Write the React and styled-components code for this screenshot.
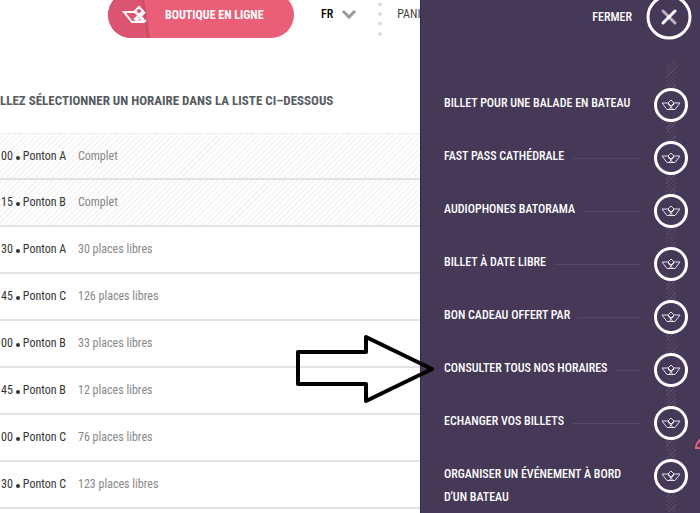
import React from 'react'
import styled, { createGlobalStyle } from 'styled-components'

const menu = [
    'BILLET POUR UNE BALADE EN BATEAU',
    'FAST PASS CATHÉDRALE',
    'AUDIOPHONES BATORAMA',
    'BILLET À DATE LIBRE',
    'BON CADEAU OFFERT PAR',
    'CONSULTER TOUS NOS HORAIRES',
    'ECHANGER VOS BILLETS',
    "ORGANISER UN ÉVÉNEMENT À BORD D'UN BATEAU",
]

const departures = [
    { time: '00', pier: 'Ponton A', seats: 'Complet', full: true },
    { time: '15', pier: 'Ponton B', seats: 'Complet', full: true },
    { time: '30', pier: 'Ponton A', seats: '30 places libres' },
    { time: '45', pier: 'Ponton C', seats: '126 places libres' },
    { time: '00', pier: 'Ponton B', seats: '33 places libres' },
    { time: '45', pier: 'Ponton B', seats: '12 places libres' },
    { time: '00', pier: 'Ponton C', seats: '76 places libres' },
    { time: '30', pier: 'Ponton C', seats: '123 places libres' },
]

function Boat() {
    return (
        <BoatIcon viewBox="0 0 20 12" aria-hidden="true">
            <path d="M7 4H1l5 6.500h2L13 5M13 4h6l-5 6.500h-2L7 5M10 1l3 3-3 3-3-3zM7 10.500h6" />
        </BoatIcon>
    )
}

function App() {
    return (
        <Page>
            <GlobalStyle />
            <Content>
                <TopBar>
                    <Shop href="#boutique">
                        <ShopMark viewBox="0 0 44 46" aria-hidden="true">
                            <path d="M0 0h35l7 46H0z" fill="#dc5570" />
                            <path d="M33 0h2l7 46h-3z" fill="#cc4d67" />
                            <path d="M27 20H16l8 10h12l2-2M27 20l9 9M27 30l10-10M31 15l4 4-4 4-4-4zM31 23l4 4-4 3-4-3z" fill="none" stroke="#fff" strokeWidth="2" />
                        </ShopMark>
                        <ShopLabel>BOUTIQUE EN LIGNE</ShopLabel>
                    </Shop>
                    <Language type="button">
                        FR
                        <Chevron viewBox="0 0 16 10" aria-hidden="true">
                            <path d="M2 2l6 6 6-6" />
                        </Chevron>
                    </Language>
                    <Dots viewBox="0 0 4 38" aria-hidden="true">
                        <circle cx="2" cy="4.500" r="2" />
                        <circle cx="2" cy="14" r="2" />
                        <circle cx="2" cy="23.500" r="2" />
                        <circle cx="2" cy="34" r="2" />
                    </Dots>
                    <Cart href="#panier">PANI</Cart>
                </TopBar>
                <Title>LLEZ SÉLECTIONNER UN HORAIRE DANS LA LISTE CI–DESSOUS</Title>
                <Schedule>
                    <tbody>
                        {departures.map((row, i) => (
                            <Departure key={i} $full={row.full}>
                                <Pier>{row.time}<Bullet />{row.pier}</Pier>
                                <Seats>{row.seats}</Seats>
                            </Departure>
                        ))}
                    </tbody>
                </Schedule>
            </Content>
            <Panel>
                <Close type="button">
                    FERMER
                    <CloseIcon viewBox="0 0 46 46" aria-hidden="true">
                        <circle cx="23" cy="23" r="21" fill="none" stroke="#fff" strokeWidth="3" />
                        <path d="M17 17l12 12" stroke="#b9b3c3" strokeWidth="3" strokeLinecap="round" />
                        <path d="M29 17L17 29" stroke="#fff" strokeWidth="3" strokeLinecap="round" />
                    </CloseIcon>
                </Close>
                <Menu>
                    {menu.map((label) => (
                        <Item key={label}>
                            <ItemLink href="#menu">
                                <Label>{label}</Label>
                                <Rule />
                                <Badge><Boat /></Badge>
                            </ItemLink>
                        </Item>
                    ))}
                </Menu>
            </Panel>
            <Arrow viewBox="0 0 140 70" aria-hidden="true">
                <path d="M2 17h68V2l66 32-66 32V49H2z" />
            </Arrow>
            <Mark viewBox="0 0 8 12" aria-hidden="true">
                <path d="M5 10H1C1 6 3 3 8 0" />
            </Mark>
        </Page>
    )
}

export default App

const GlobalStyle = createGlobalStyle`
    * {
        box-sizing: border-box;
    }
    body {
        margin: 0;
        background: #ffffff;
        font-family: "Roboto Condensed", "Liberation Sans Narrow", "Liberation Sans", sans-serif;
    }
    a, button {
        font: inherit;
        color: inherit;
        text-decoration: none;
        border: none;
        background: none;
        padding: 0;
        cursor: pointer;
    }
`
const Page = styled.div`
    position: relative;
    display: grid;
    grid-template-columns: 3fr 2fr;
    height: 100vh;
    overflow: hidden;
`
const Content = styled.main`
    min-width: 0;
    overflow: hidden;
    white-space: nowrap;
`
const TopBar = styled.header`
    display: flex;
    align-items: flex-start;
    height: 38px;
    padding-left: 108px;
    font-size: 12px;
    line-height: 28px;
`
const Shop = styled.a`
    display: flex;
    flex: none;
    width: 186px;
    height: 46px;
    margin-top: -8px;
    border-radius: 23px;
    overflow: hidden;
    background: #eb5e78;
    color: #ffffff;
    font-weight: bold;
`
const ShopMark = styled.svg`
    flex: none;
    width: 44px;
    height: 46px;
`
const ShopLabel = styled.span`
    padding: 9px 0 0 13px;
`
const Language = styled.button`
    display: flex;
    flex: none;
    align-items: center;
    gap: 8px;
    margin-left: 27px;
    color: #000000;
    font-weight: 500;
`
const Chevron = styled.svg`
    width: 16px;
    height: 10px;
    fill: none;
    stroke: #999999;
    stroke-width: 3px;
`
const Dots = styled.svg`
    flex: none;
    width: 4px;
    height: 38px;
    margin: 0 15px 0 21px;
    fill: #dddddd;
`
const Cart = styled.a`
    color: #444444;
`
const Title = styled.h1`
    margin: 53px 0 22px;
    font-size: 13px;
    line-height: 20px;
    font-weight: bold;
    color: #555b60;
`
const Schedule = styled.table`
    width: 100%;
    border-collapse: collapse;
    border-top: 1px solid #eeeeee;
    font-size: 12px;
    line-height: 20px;
`
const Departure = styled.tr`
    height: 47px;
    border-bottom: 2px solid #e2e2e2;
    background: ${(props) => props.$full ? 'repeating-linear-gradient(135deg, #ffffff 0 2px, #f6f6f6 2px 4px)' : '#ffffff'};

    &:first-child {
        height: 45px;
    }
`
const Pier = styled.td`
    width: 78px;
    padding: 0 0 0 1px;
    color: #333333;
`
const Bullet = styled.span`
    display: inline-block;
    width: 4px;
    height: 4px;
    margin: 0 3px;
    border-radius: 50%;
    background: #333333;
`
const Seats = styled.td`
    padding: 0;
    color: #888888;
`
const Panel = styled.aside`
    border-left: 1px solid #33264f;
    background: #453957;
    color: #ffffff;
    font-size: 12px;
    font-weight: 500;
`
const Close = styled.button`
    display: flex;
    align-items: center;
    gap: 14px;
    margin: -6px 8px 0 auto;
`
const CloseIcon = styled.svg`
    width: 46px;
    height: 46px;
`
const Menu = styled.ul`
    margin: 17px 0 0;
    padding: 31px 12px 0 23px;
    list-style: none;
    background:
        linear-gradient(135deg, #453957 50%, transparent 50%) right 24px top / 10px 10px no-repeat,
        repeating-linear-gradient(135deg, #453957 0 2px, #574b68 2px 3px) right 24px top / 10px 100% no-repeat;
`
const Item = styled.li`
    height: 53px;
`
const ItemLink = styled.a`
    display: flex;
    align-items: flex-start;
`
const Label = styled.span`
    max-width: 196px;
    padding-top: 4px;
    line-height: 23px;
`
const Rule = styled.span`
    flex: 1;
    height: 1px;
    margin: 17px 14px 0 8px;
    background: #54486a;
`
const Badge = styled.span`
    display: flex;
    flex: none;
    align-items: center;
    justify-content: center;
    width: 34px;
    height: 34px;
    border: 3px solid #ffffff;
    border-radius: 50%;
    background: #453957;
`
const BoatIcon = styled.svg`
    flex: none;
    width: 20px;
    height: 12px;
    fill: none;
    stroke: #e4e1e8;
    stroke-width: 1px;
`
const Arrow = styled.svg`
    position: absolute;
    top: 335px;
    left: 296px;
    width: 140px;
    height: 70px;
    fill: none;
    stroke: #000000;
    stroke-width: 4px;
    stroke-linejoin: round;
`
const Mark = styled.svg`
    position: absolute;
    right: -3px;
    bottom: 63px;
    width: 8px;
    height: 12px;
    fill: none;
    stroke: #eb5e78;
    stroke-width: 2px;
`
